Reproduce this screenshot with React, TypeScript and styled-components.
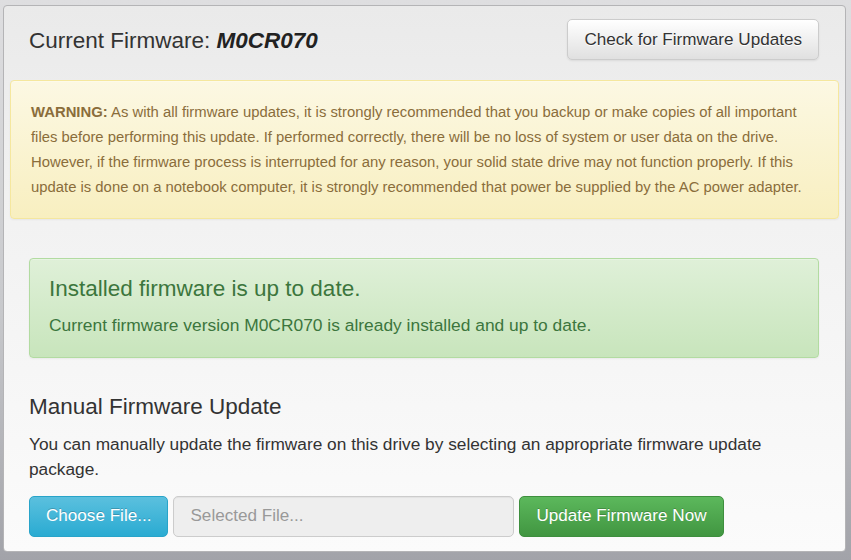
import React from "react";
import styled, { createGlobalStyle } from "styled-components";

const GlobalStyle = createGlobalStyle`
  html, body {
    margin: 0;
    padding: 0;
  }
  body {
    height: 560px;
    overflow: hidden;
    background: linear-gradient(to bottom, #dedee0 0%, #c8c9cc 55%, #a2a3a9 100%);
    font-family: "Liberation Sans", Arial, sans-serif;
    color: #333;
  }
`;

const Page = styled.div`
  padding: 5px 5px 0 3px;
`;

const Panel = styled.div`
  width: 843px;
  height: 547px;
  box-sizing: border-box;
  border: 1px solid #b4b4b6;
  border-radius: 4px;
  background: linear-gradient(to bottom, #eaeaea 0%, #f2f2f2 40%, #fbfbfb 100%);
  display: flex;
  flex-direction: column;
`;

const Header = styled.div`
  display: flex;
  justify-content: space-between;
  align-items: center;
  padding: 13px 26px 20px 25px;
`;

const Title = styled.h3`
  margin: 0;
  font-size: 22.5px;
  font-weight: normal;
  color: #333;
  line-height: 1.1;
  padding-top: 4px;
`;

const Version = styled.strong`
  font-style: italic;
  color: #222;
`;

const Button = styled.button<{ $variant?: "default" | "info" | "success" }>`
  height: 41px;
  padding: 0 16px;
  font-family: "Liberation Sans", Arial, sans-serif;
  font-size: 17.1px;
  border-radius: 5px;
  cursor: pointer;
  ${({ $variant }) =>
    $variant === "info"
      ? `
    color: #fff;
    background: linear-gradient(to bottom, #5bc0de 0%, #2aabd2 100%);
    border: 1px solid #28a4c9;
    text-shadow: 0 -1px 0 rgba(0, 0, 0, 0.2);
  `
      : $variant === "success"
      ? `
    color: #fff;
    background: linear-gradient(to bottom, #5cb85c 0%, #419641 100%);
    border: 1px solid #3e8f3e;
    text-shadow: 0 -1px 0 rgba(0, 0, 0, 0.2);
  `
      : `
    color: #333;
    background: linear-gradient(to bottom, #ffffff 0%, #e0e0e0 100%);
    border: 1px solid #cccccc;
    text-shadow: 0 1px 0 #fff;
    box-shadow: 0 1px 2px rgba(0, 0, 0, 0.08);
  `}
`;

const Alert = styled.div<{ $kind: "warning" | "success" }>`
  border-radius: 4px;
  box-shadow: inset 0 1px 0 rgba(255, 255, 255, 0.25), 0 1px 2px rgba(0, 0, 0, 0.05);
  ${({ $kind }) =>
    $kind === "warning"
      ? `
    margin: 0 6px;
    padding: 19px 20px 18px 20px;
    color: #8a6d3b;
    background: linear-gradient(to bottom, #fcf8e3 0%, #f8efc0 100%);
    border: 1px solid #f5e79e;
  `
      : `
    margin: 39px 26px 0 25px;
    padding: 18px 20px 20px 19px;
    color: #3c763d;
    background: linear-gradient(to bottom, #dff0d8 0%, #c8e5bc 100%);
    border: 1px solid #b2dba1;
  `}
`;

const WarningText = styled.p`
  margin: 0;
  font-size: 14.85px;
  line-height: 25px;
`;

const AlertHeading = styled.h3`
  margin: 0 0 12px;
  font-size: 22.5px;
  font-weight: normal;
  line-height: 1.1;
`;

const AlertText = styled.p`
  margin: 0;
  font-size: 17.4px;
  line-height: 23px;
`;

const Section = styled.div`
  padding: 37px 26px 0 25px;
`;

const SectionHeading = styled.h3`
  margin: 0 0 12px;
  font-size: 22.5px;
  font-weight: normal;
  line-height: 1.1;
  color: #333;
`;

const SectionText = styled.p`
  margin: 0 0 14px;
  font-size: 17.3px;
  line-height: 25px;
  color: #333;
`;

const FileRow = styled.div`
  display: flex;
  align-items: center;
  gap: 5px;
`;

const FileInput = styled.input`
  width: 341px;
  height: 41px;
  box-sizing: border-box;
  padding: 0 16px;
  font-family: "Liberation Sans", Arial, sans-serif;
  font-size: 17.1px;
  background: #eeeeee;
  border: 1px solid #cccccc;
  border-radius: 5px;
  color: #555;
  box-shadow: inset 0 1px 1px rgba(0, 0, 0, 0.05);

  &::placeholder {
    color: #999;
  }
`;

export default function App() {
  return (
    <>
      <GlobalStyle />
      <Page>
        <Panel>
          <Header>
            <Title>
              Current Firmware: <Version>M0CR070</Version>
            </Title>
            <Button>Check for Firmware Updates</Button>
          </Header>

          <Alert $kind="warning">
            <WarningText>
              <strong>WARNING:</strong> As with all firmware updates, it is strongly recommended
              that you backup or make copies of all important files before performing this
              update. If performed correctly, there will be no loss of system or user data on the
              drive. However, if the firmware process is interrupted for any reason, your solid
              state drive may not function properly. If this update is done on a notebook
              computer, it is strongly recommended that power be supplied by the AC power adapter.
            </WarningText>
          </Alert>

          <Alert $kind="success">
            <AlertHeading>Installed firmware is up to date.</AlertHeading>
            <AlertText>Current firmware version M0CR070 is already installed and up to date.</AlertText>
          </Alert>

          <Section>
            <SectionHeading>Manual Firmware Update</SectionHeading>
            <SectionText>
              You can manually update the firmware on this drive by selecting an appropriate
              firmware update package.
            </SectionText>
            <FileRow>
              <Button $variant="info">Choose File...</Button>
              <FileInput placeholder="Selected File..." readOnly />
              <Button $variant="success">Update Firmware Now</Button>
            </FileRow>
          </Section>
        </Panel>
      </Page>
    </>
  );
}
